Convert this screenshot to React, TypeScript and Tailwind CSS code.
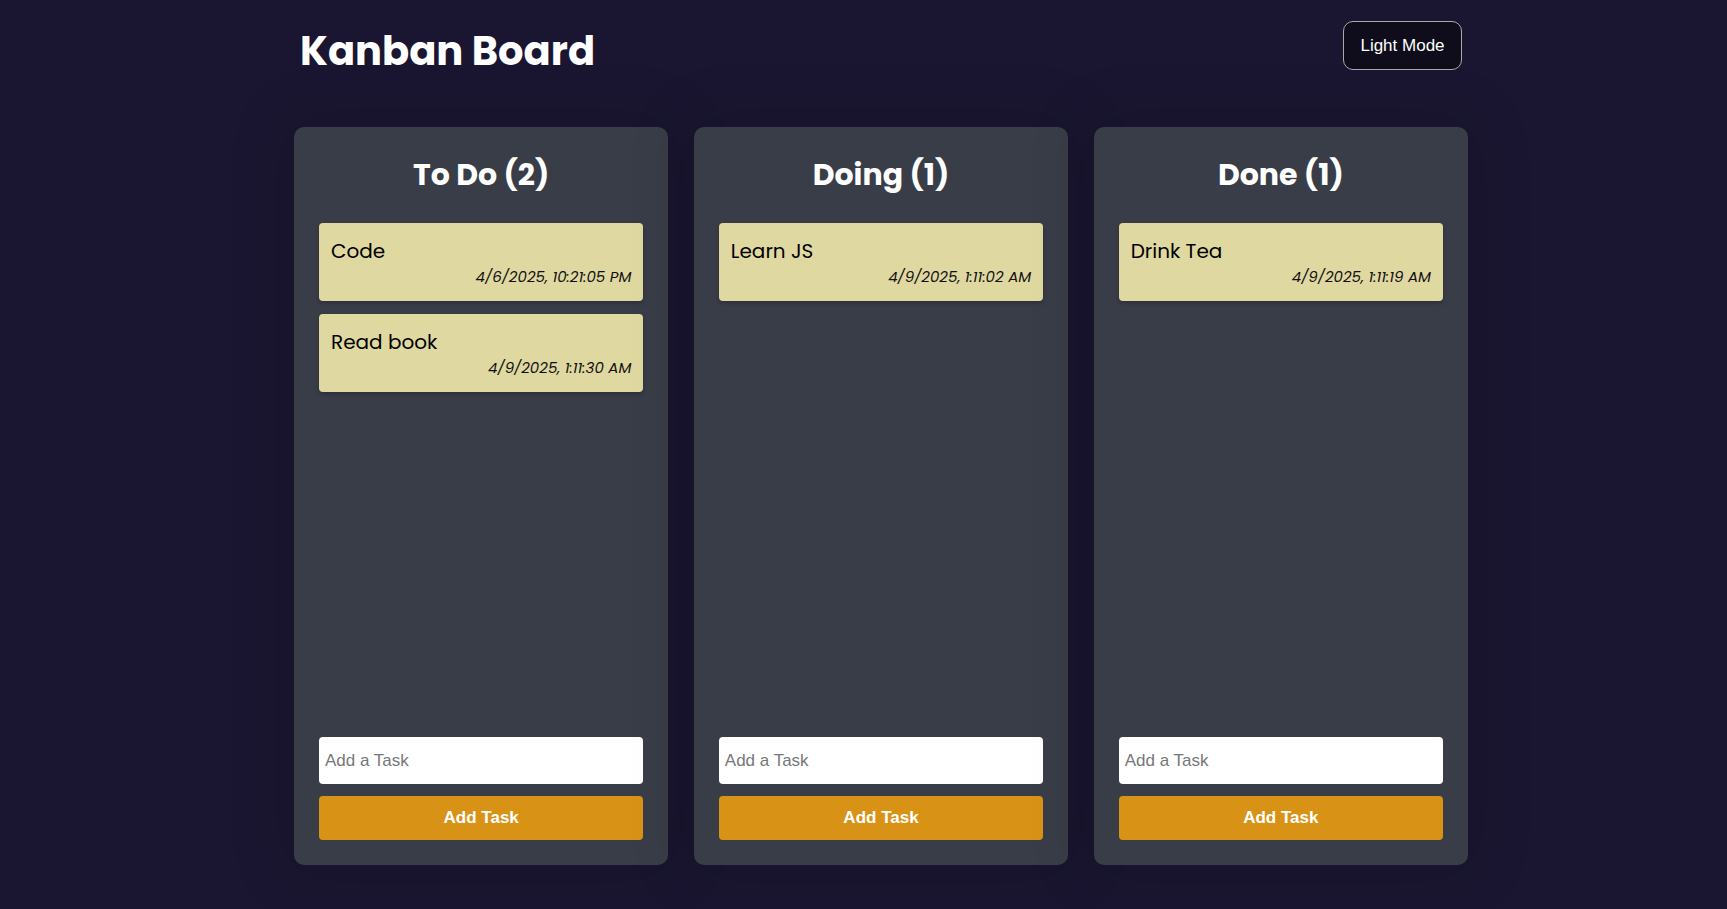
import { useState } from "react";

type Task = { id: number; text: string; date: string };

const initial: Record<string, Task[]> = {
  todo: [
    { id: 1, text: "Code", date: "4/6/2025, 10:21:05 PM" },
    { id: 2, text: "Read book", date: "4/9/2025, 1:11:30 AM" },
  ],
  doing: [{ id: 3, text: "Learn JS", date: "4/9/2025, 1:11:02 AM" }],
  done: [{ id: 4, text: "Drink Tea", date: "4/9/2025, 1:11:19 AM" }],
};

const columns = [
  { key: "todo", title: "To Do" },
  { key: "doing", title: "Doing" },
  { key: "done", title: "Done" },
];

const poppins = "font-['Poppins','DejaVu_Sans',sans-serif]";

function Column({ title, tasks, onAdd }: { title: string; tasks: Task[]; onAdd: (t: string) => void }) {
  const [value, setValue] = useState("");

  return (
    <div className="flex h-[738px] w-[374.5px] flex-col rounded-[10px] bg-[#393d48] px-[25px] pb-[25px] pt-[25px] shadow-[0_0_60px_10px_rgba(0,0,0,0.12)]">
      <h2 className={`${poppins} text-center text-[30px] font-bold leading-[46px] text-white`}>
        {title} ({tasks.length})
      </h2>

      <div className="mt-[25px] flex flex-1 flex-col gap-[13px]">
        {tasks.map((t) => (
          <div
            key={t.id}
            className={`${poppins} flex h-[78px] flex-col rounded-[4px] bg-[#e0d8a1] px-[12px] pt-[13px] shadow-[0_2px_4px_rgba(0,0,0,0.25)]`}
          >
            <span className="text-[20px] leading-[30px] text-black">{t.text}</span>
            <span className="text-right text-[15px] italic leading-[22px] text-[#111]">{t.date}</span>
          </div>
        ))}
      </div>

      <input
        value={value}
        onChange={(e) => setValue(e.target.value)}
        placeholder="Add a Task"
        className="h-[47px] w-full rounded-[4px] bg-white px-[6px] font-['Liberation_Sans',Arial,sans-serif] text-[17px] text-black placeholder-[#777] outline-none"
      />
      <button
        onClick={() => {
          if (value.trim()) {
            onAdd(value.trim());
            setValue("");
          }
        }}
        className="mt-[12px] h-[44px] w-full rounded-[4px] bg-[#d89317] font-['Liberation_Sans',Arial,sans-serif] text-[17px] font-bold text-white"
      >
        Add Task
      </button>
    </div>
  );
}

export default function App() {
  const [tasks, setTasks] = useState(initial);

  const addTask = (key: string, text: string) => {
    setTasks((prev) => ({
      ...prev,
      [key]: [...prev[key], { id: Date.now(), text, date: new Date().toLocaleString("en-US") }],
    }));
  };

  return (
    <main className="min-h-screen bg-[#1a1631]">
      <div className="mx-auto w-[1209px] pl-[35px]">
        {/* Header */}
        <div className="flex items-start justify-between px-[6px] pt-[21px]">
          <h1 className={`${poppins} mt-[4px] text-[40px] font-bold leading-[52px] text-white`}>Kanban Board</h1>
          <button className="h-[49px] w-[119px] rounded-[10px] border border-[#aaa] bg-[#0f0c1c] font-['Liberation_Sans',Arial,sans-serif] text-[17px] text-white">
            Light Mode
          </button>
        </div>

        {/* Board */}
        <div className="mt-[50px] flex gap-[25.5px]">
          {columns.map((c) => (
            <Column key={c.key} title={c.title} tasks={tasks[c.key]} onAdd={(t) => addTask(c.key, t)} />
          ))}
        </div>
      </div>
    </main>
  );
}
